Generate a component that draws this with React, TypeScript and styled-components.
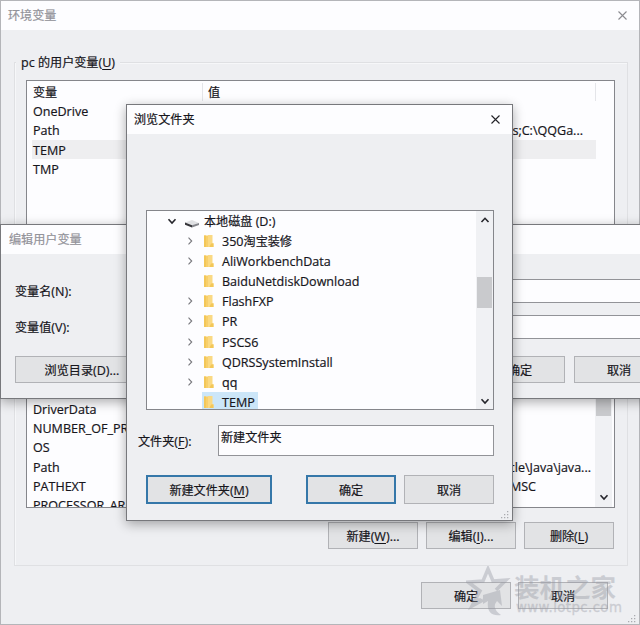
import React from "react";
import styled, { createGlobalStyle, css } from "styled-components";

const GlobalStyle = createGlobalStyle`
  * { box-sizing: border-box; }
  html, body { margin: 0; padding: 0; overflow: hidden; }
  body { font-family: "Open Sans", "Noto Sans CJK SC", sans-serif; color: #17161c; }
`;

const Desktop = styled.div`
  position: relative;
  width: 640px;
  height: 625px;
  overflow: hidden;
  background: #eeeff2;
`;

const Window = styled.section<{ $x: number; $y: number; $w: number; $h: number; $raised?: boolean }>`
  position: absolute;
  left: ${(p) => p.$x}px;
  top: ${(p) => p.$y}px;
  width: ${(p) => p.$w}px;
  height: ${(p) => p.$h}px;
  display: flex;
  flex-direction: column;
  background: #eeeff2;
  border: 1px solid ${(p) => (p.$raised ? "#77787c" : "#b4b5b9")};
  ${(p) =>
    p.$raised &&
    css`
      box-shadow: 0 3px 11px rgba(0, 0, 0, 0.33);
    `}
`;

const TitleBar = styled.header<{ $muted?: boolean; $pad: number }>`
  height: 29px;
  flex: none;
  display: flex;
  align-items: center;
  justify-content: space-between;
  padding: 0 11px 1px ${(p) => p.$pad}px;
  background: #fdfdff;
  color: ${(p) => (p.$muted ? "#93939a" : "#17161c")};
`;

const Line = styled.span<{ $latinOnly: boolean }>`
  display: flex;
  align-items: baseline;
  height: 18px;
  padding-top: ${(p) => (p.$latinOnly ? 1 : 0)}px;
  white-space: pre;
  line-height: 18px;
  -webkit-text-stroke: 0.2px currentColor;
`;
const Cjk = styled.span`
  font-family: "Noto Sans CJK SC", sans-serif;
  font-size: 12.1px;
`;
const Latin = styled.span`
  font-size: 12.55px;
`;
const Key = styled.span`
  text-decoration: underline;
  text-underline-offset: 1.5px;
  text-decoration-thickness: 1px;
`;

function Label({ text }: { text: string }) {
  const runs = text.match(/[\u4e00-\u9fff]+|[^\u4e00-\u9fff]+/g) ?? [];
  return (
    <Line $latinOnly={!/[\u4e00-\u9fff]/.test(text)}>
      {runs.map((run, i) => {
        if (/[\u4e00-\u9fff]/.test(run)) return <Cjk key={i}>{run}</Cjk>;
        const m = run.match(/^(.*)_\{(.)\}(.*)$/);
        return (
          <Latin key={i}>
            {m ? (
              <>
                {m[1]}
                <Key>{m[2]}</Key>
                {m[3]}
              </>
            ) : (
              run
            )}
          </Latin>
        );
      })}
    </Line>
  );
}

const CloseIcon = ({ color }: { color: string }) => (
  <svg width="11" height="11" viewBox="0 0 11 11" fill="none" stroke={color} strokeWidth="1.1">
    <path d="M1.5 1.5 9.5 9.5M9.5 1.5 1.5 9.5" />
  </svg>
);

const Chevron = ({ dir, small }: { dir: "up" | "down" | "right"; small?: boolean }) => {
  const d = { up: "M1.5 7 5 3.3 8.5 7", down: "M1.5 3.3 5 7 8.5 3.3", right: "M3.5 1.7 6.7 5 3.5 8.3" }[dir];
  return (
    <svg width="10" height="10" viewBox="0 0 10 10" fill="none" stroke={small ? "#77777c" : "#25252b"} strokeWidth={small ? 1.1 : 1.6}>
      <path d={d} />
    </svg>
  );
};

const FolderIcon = () => (
  <svg width="12" height="14" viewBox="0 0 12 14">
    <path d="M1 1.5H5.5V13H1Z" fill="#f8cf6a" />
    <path d="M5 1H9.5V9H10.5V13H5Z" fill="#fad983" />
    <path d="M1 1.5H3V13H1ZM8 9.5H10.5V13H6.5Z" fill="#f3c758" />
  </svg>
);

const DriveIcon = () => (
  <svg width="16" height="14" viewBox="0 0 16 14">
    <path d="M1 8.5 8 6 15 9 8 11.6Z" fill="#e0e1e4" />
    <path d="M1 8.5 8 11.2V13.6L1 10.8Z" fill="#35353a" />
    <path d="M8 11.2 15 9V11L8 13.6Z" fill="#85868c" />
  </svg>
);

const Grip = styled.svg`
  position: absolute;
  right: 3px;
  bottom: 1px;
`;
const ResizeGrip = () => (
  <Grip width="8" height="8" viewBox="0 0 8 8" fill="#aaabb0">
    <path d="M6 0H7.3V1.3H6ZM6 3H7.3V4.3H6ZM6 6H7.3V7.3H6ZM3 3H4.3V4.3H3ZM3 6H4.3V7.3H3ZM0 6H1.3V7.3H0Z" />
  </Grip>
);

const Button = styled.button<{ $w: number; $h?: number; $accent?: boolean }>`
  flex: none;
  width: ${(p) => p.$w}px;
  height: ${(p) => p.$h ?? 27}px;
  padding: 0;
  display: flex;
  align-items: center;
  justify-content: center;
  color: inherit;
  font-family: inherit;
  background: #e2e3e5;
  border: ${(p) => (p.$accent ? "2px solid #3577a9" : "1px solid #b1b2b6")};
`;

/* Main window */
const MainBody = styled.div`
  flex: 1;
  padding: 32px 11px 0 13px;
  display: flex;
  flex-direction: column;
`;
const Group = styled.div<{ $h: number }>`
  position: relative;
  height: ${(p) => p.$h}px;
  margin-bottom: 8px;
  padding: 17px 12px 0 11px;
  border: 1px solid #dfe0e3;
  box-shadow: inset 1px 1px #f6f7f9;
`;
const Legend = styled.div`
  position: absolute;
  left: 1px;
  top: -10px;
  padding: 0 5px;
  background: #eeeff2;
`;
const ListBox = styled.div<{ $h: number }>`
  height: ${(p) => p.$h}px;
  border: 1px solid #85868b;
  background: #fdfdff;
  overflow: hidden;
  display: flex;
`;
const Rows = styled.div<{ $top: number; $right: number }>`
  flex: 1;
  min-width: 0;
  padding: ${(p) => p.$top}px ${(p) => p.$right}px 0 5px;
`;
const Row = styled.div<{ $selected?: boolean; $head?: boolean }>`
  height: 19.3px;
  display: grid;
  grid-template-columns: 170px 1fr;
  align-items: center;
  background: ${(p) => (p.$selected ? "#eeeef0" : "transparent")};
  & > * { padding-left: 1px; }
  ${(p) =>
    p.$head &&
    css`
      & > * + * { border-left: 1px solid #e4e5e9; border-right: 1px solid #e4e5e9; padding-left: 5px; }
    `}
`;
const Value = styled.div<{ $inset: number }>`
  display: flex;
  justify-content: flex-end;
  padding-right: ${(p) => p.$inset}px;
`;
const ScrollTrack = styled.div`
  width: 17px;
  flex: none;
  display: flex;
  flex-direction: column;
  align-items: center;
  justify-content: space-between;
  padding: 4px 0 3px;
  background: #f0f1f4;
`;
const ListScroll = styled(ScrollTrack)`
  margin-right: 2px;
  padding-bottom: 5px;
`;
const Thumb = styled.div<{ $h: number; $lift: number }>`
  width: 15px;
  height: ${(p) => p.$h}px;
  margin-bottom: ${(p) => p.$lift}px;
  background: #c9cacd;
`;
const MainActions = styled.div`
  display: flex;
  justify-content: flex-end;
  gap: 8px;
  padding: 14px 1px 0 0;
`;
const FooterActions = styled.div`
  display: flex;
  gap: 7px;
  justify-content: flex-end;
  padding: 8px 20px 0 0;
`;

/* Variable editing window */
const EditBody = styled.div`
  padding: 25px 0 0 14px;
  display: flex;
  flex-direction: column;
  gap: 12px;
`;
const EditField = styled.div`
  display: grid;
  grid-template-columns: 112px 600px;
  height: 24px;
  align-items: center;
`;
const TextField = styled.div<{ $h: number }>`
  height: ${(p) => p.$h}px;
  background: #fdfdff;
  border: 1px solid #929398;
  padding: 2px 2px;
`;
const EditActions = styled.div`
  display: grid;
  grid-template-columns: 460px 99px 89px;
  padding-top: 5px;
`;

/* Folder browser */
const BrowseBody = styled.div`
  flex: 1;
  padding: 76px 18px 0 19px;
`;
const Tree = styled.div`
  display: flex;
  width: 348px;
  height: 200px;
  border: 1px solid #85868b;
  background: #fdfdff;
`;
const TreeRows = styled.div`
  flex: 1;
  min-width: 0;
  overflow: hidden;
`;
const TreeRow = styled.div<{ $root?: boolean }>`
  height: 20.08px;
  display: flex;
  align-items: center;
  padding-left: ${(p) => (p.$root ? 20 : 38)}px;
`;
const Toggle = styled.span`
  display: flex;
  width: 17px;
  height: 10px;
  flex: none;
`;
const TreeName = styled.span<{ $selected?: boolean; $root?: boolean }>`
  height: 20px;
  display: flex;
  align-items: center;
  gap: ${(p) => (p.$root ? 4 : 7)}px;
  padding: 0 3px 0 ${(p) => (p.$root ? 0 : 1)}px;
  background: ${(p) => (p.$selected ? "#cce6f8" : "transparent")};
`;
const FolderField = styled.div`
  display: grid;
  grid-template-columns: 80px 276px;
  align-items: center;
  margin: 15px 0 19px -8px;
`;
const BrowseActions = styled.div`
  display: grid;
  grid-template-columns: 160px 98px 89px;
`;

/* Watermark printed over the lower right corner */
const Watermark = styled.div`
  position: absolute;
  left: 466px;
  top: 566px;
  display: flex;
  opacity: 0.4;
  color: #9799a4;
`;
const WatermarkText = styled.div`
  padding-top: 7px;
  width: 112px;
`;
const BrandName = styled.div`
  font: 700 25.5px/26px "Noto Sans CJK SC", sans-serif;
  white-space: nowrap;
`;
const BrandUrl = styled.div`
  font: 400 13.3px/18px "DejaVu Sans", sans-serif;
  letter-spacing: 0.4px;
  margin-left: 2px;
  -webkit-text-stroke: 0.3px currentColor;
`;

const folders: [string, boolean][] = [
  ["350淘宝装修", true],
  ["AliWorkbenchData", true],
  ["BaiduNetdiskDownload", false],
  ["FlashFXP", true],
  ["PR", true],
  ["PSCS6", true],
  ["QDRSSystemInstall", true],
  ["qq", true],
  ["TEMP", false],
];

export default function App() {
  return (
    <>
      <GlobalStyle />
      <Desktop>
        <Window $x={0} $y={0} $w={640} $h={625}>
          <TitleBar $muted $pad={7}>
            <Label text="环境变量" />
            <CloseIcon color="#8b8b90" />
          </TitleBar>
          <MainBody>
            <Group $h={185}>
              <Legend>
                <Label text="pc 的用户变量(_{U})" />
              </Legend>
              <ListBox $h={160}>
                <Rows $top={1} $right={18}>
                  <Row $head>
                    <Label text="变量" />
                    <Label text="值" />
                  </Row>
                  <Row><Label text="OneDrive" /></Row>
                  <Row>
                    <Label text="Path" />
                    <Value $inset={13}><Label text="C:\Program Files;C:\QQGa..." /></Value>
                  </Row>
                  <Row $selected><Label text="TEMP" /></Row>
                  <Row><Label text="TMP" /></Row>
                </Rows>
              </ListBox>
            </Group>
            <Group $h={311}>
              <ListBox $h={235}>
                <Rows $top={125} $right={0}>
                  <Row><Label text="DriverData" /></Row>
                  <Row><Label text="NUMBER_OF_PR" /></Row>
                  <Row><Label text="OS" /></Row>
                  <Row>
                    <Label text="Path" />
                    <Value $inset={4}><Label text="C:\Oracle\Java\java..." /></Value>
                  </Row>
                  <Row>
                    <Label text="PATHEXT" />
                    <Value $inset={59}><Label text=".COM;.MSC" /></Value>
                  </Row>
                  <Row><Label text="PROCESSOR_AR" /></Row>
                </Rows>
                <ListScroll>
                  <Chevron dir="up" />
                  <Thumb $h={30} $lift={-21} />
                  <Chevron dir="down" />
                </ListScroll>
              </ListBox>
              <MainActions>
                <Button $w={90}><Label text="新建(_{W})..." /></Button>
                <Button $w={90}><Label text="编辑(_{I})..." /></Button>
                <Button $w={90}><Label text="删除(_{L})" /></Button>
              </MainActions>
            </Group>
            <FooterActions>
              <Button $w={90}><Label text="确定" /></Button>
              <Button $w={90}><Label text="取消" /></Button>
            </FooterActions>
          </MainBody>
          <ResizeGrip />
        </Window>

        <Window $x={0} $y={224} $w={680} $h={175} $raised>
          <TitleBar $muted $pad={8}>
            <Label text="编辑用户变量" />
          </TitleBar>
          <EditBody>
            <EditField>
              <Label text="变量名(N):" />
              <TextField $h={24} />
            </EditField>
            <EditField>
              <Label text="变量值(V):" />
              <TextField $h={24} />
            </EditField>
            <EditActions>
              <Button $w={134}><Label text="浏览目录(D)..." /></Button>
              <Button $w={90}><Label text="确定" /></Button>
              <Button $w={90}><Label text="取消" /></Button>
            </EditActions>
          </EditBody>
        </Window>

        <Window $x={126} $y={104} $w={387} $h={417} $raised>
          <TitleBar $pad={7}>
            <Label text="浏览文件夹" />
            <CloseIcon color="#222228" />
          </TitleBar>
          <BrowseBody>
            <Tree>
              <TreeRows>
                <TreeRow $root>
                  <Toggle><Chevron dir="down" /></Toggle>
                  <TreeName $root>
                    <DriveIcon />
                    <Label text="本地磁盘 (D:)" />
                  </TreeName>
                </TreeRow>
                {folders.map(([name, expandable]) => (
                  <TreeRow key={name}>
                    <Toggle>{expandable && <Chevron dir="right" small />}</Toggle>
                    <TreeName $selected={name === "TEMP"}>
                      <FolderIcon />
                      <Label text={name} />
                    </TreeName>
                  </TreeRow>
                ))}
              </TreeRows>
              <ScrollTrack>
                <Chevron dir="up" />
                <Thumb $h={31} $lift={36} />
                <Chevron dir="down" />
              </ScrollTrack>
            </Tree>
            <FolderField>
              <Label text="文件夹(_{F}):" />
              <TextField $h={31}><Label text="新建文件夹" /></TextField>
            </FolderField>
            <BrowseActions>
              <Button $w={126} $h={29} $accent><Label text="新建文件夹(_{M})" /></Button>
              <Button $w={90} $h={29} $accent><Label text="确定" /></Button>
              <Button $w={90} $h={29}><Label text="取消" /></Button>
            </BrowseActions>
          </BrowseBody>
          <ResizeGrip />
        </Window>

        <Watermark>
          <svg width="48" height="54" viewBox="0 0 48 54" fill="none" stroke="#9799a4" strokeWidth="3.5">
            <path d="M15 34 9 34 14 25 2 16 17 15 22 3 27 15 40 14 30 24M9 34 6 40 17 34" />
            <path d="M17 29 34 24 36 40 31 35Q25 42 35 49Q20 51 22 35L17 38Z" fill="#9799a4" stroke="none" />
          </svg>
          <WatermarkText>
            <BrandName>装机之家</BrandName>
            <BrandUrl>www.lotpc.com</BrandUrl>
          </WatermarkText>
        </Watermark>
      </Desktop>
    </>
  );
}
